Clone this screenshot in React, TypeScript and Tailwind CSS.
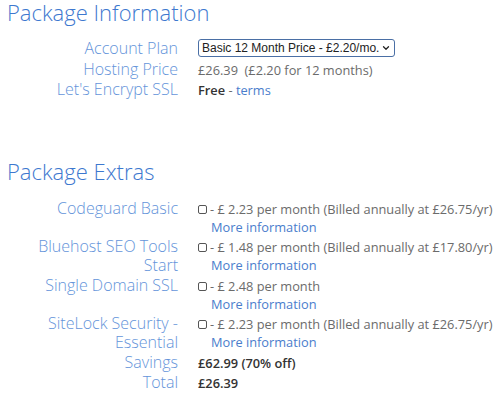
import { ChevronDown } from 'lucide-react';

const font = { fontFamily: '"Open Sans", sans-serif' };

function Row({ label, children }: { label: React.ReactNode; children: React.ReactNode }) {
  return (
    <>
      <div className="text-right text-[16px] font-light leading-[19px] text-[#6494da]">{label}</div>
      <div className="text-[12.8px] leading-[18px] pt-[1px] text-[#6b6b6b]">{children}</div>
    </>
  );
}

function Extra({ price, billed }: { price: string; billed?: string }) {
  return (
    <div>
      <div className="flex items-center">
        <span className="inline-block w-[9px] h-[9px] border border-[#555] rounded-[2px] mr-[3px]" />
        <span>
          - £ {price} per month{billed ? ` (Billed annually at ${billed}/yr)` : ''}
        </span>
      </div>
      <a href="#" className="block pl-[13px] text-[#4a7dcc]">More information</a>
    </div>
  );
}

export default function App() {
  return (
    <div className="w-[500px] h-[395px] bg-white overflow-hidden pl-[7px]" style={font}>
      <h2 className="text-[22px] font-light leading-[25px] text-[#3d78cf]">Package Information</h2>

      <div className="grid grid-cols-[171px_1fr] gap-x-5 gap-y-[1px] mt-[14px]">
        <Row label="Account Plan">
          <div
            className="relative flex items-center w-[197px] h-[18px] border border-[#4a6fa5] rounded-[3px] pl-[3px] text-[#222] text-[12px] whitespace-nowrap overflow-hidden -mt-[1px] mb-[2px]"
            style={{ fontFamily: '"Liberation Sans", Arial, sans-serif' }}
          >
            Basic 12 Month Price - £2.20/mo.
            <ChevronDown className="absolute right-[3px] w-[10px] h-[10px]" strokeWidth={3} />
          </div>
        </Row>
        <Row label="Hosting Price">£26.39&nbsp;&nbsp;(£2.20 for 12 months)</Row>
        <Row label="Let's Encrypt SSL">
          <span className="font-semibold text-[#333]">Free</span> - <a href="#" className="text-[#4a7dcc]">terms</a>
        </Row>
      </div>

      <h2 className="text-[22px] font-light leading-[26px] text-[#3d78cf] mt-[59px]">Package Extras</h2>

      <div className="grid grid-cols-[171px_1fr] gap-x-5 gap-y-[1px] mt-[15px]">
        <Row label="Codeguard Basic"><Extra price="2.23" billed="£26.75" /></Row>
        <Row label={<>Bluehost SEO Tools<br />Start</>}><Extra price="1.48" billed="£17.80" /></Row>
        <Row label="Single Domain SSL"><Extra price="2.48" /></Row>
        <Row label={<>SiteLock Security -<br />Essential</>}><Extra price="2.23" billed="£26.75" /></Row>
        <Row label="Savings"><span className="font-semibold text-[#333]">£62.99 (70% off)</span></Row>
        <Row label="Total"><span className="font-semibold text-[#333]">£26.39</span></Row>
      </div>
    </div>
  );
}
